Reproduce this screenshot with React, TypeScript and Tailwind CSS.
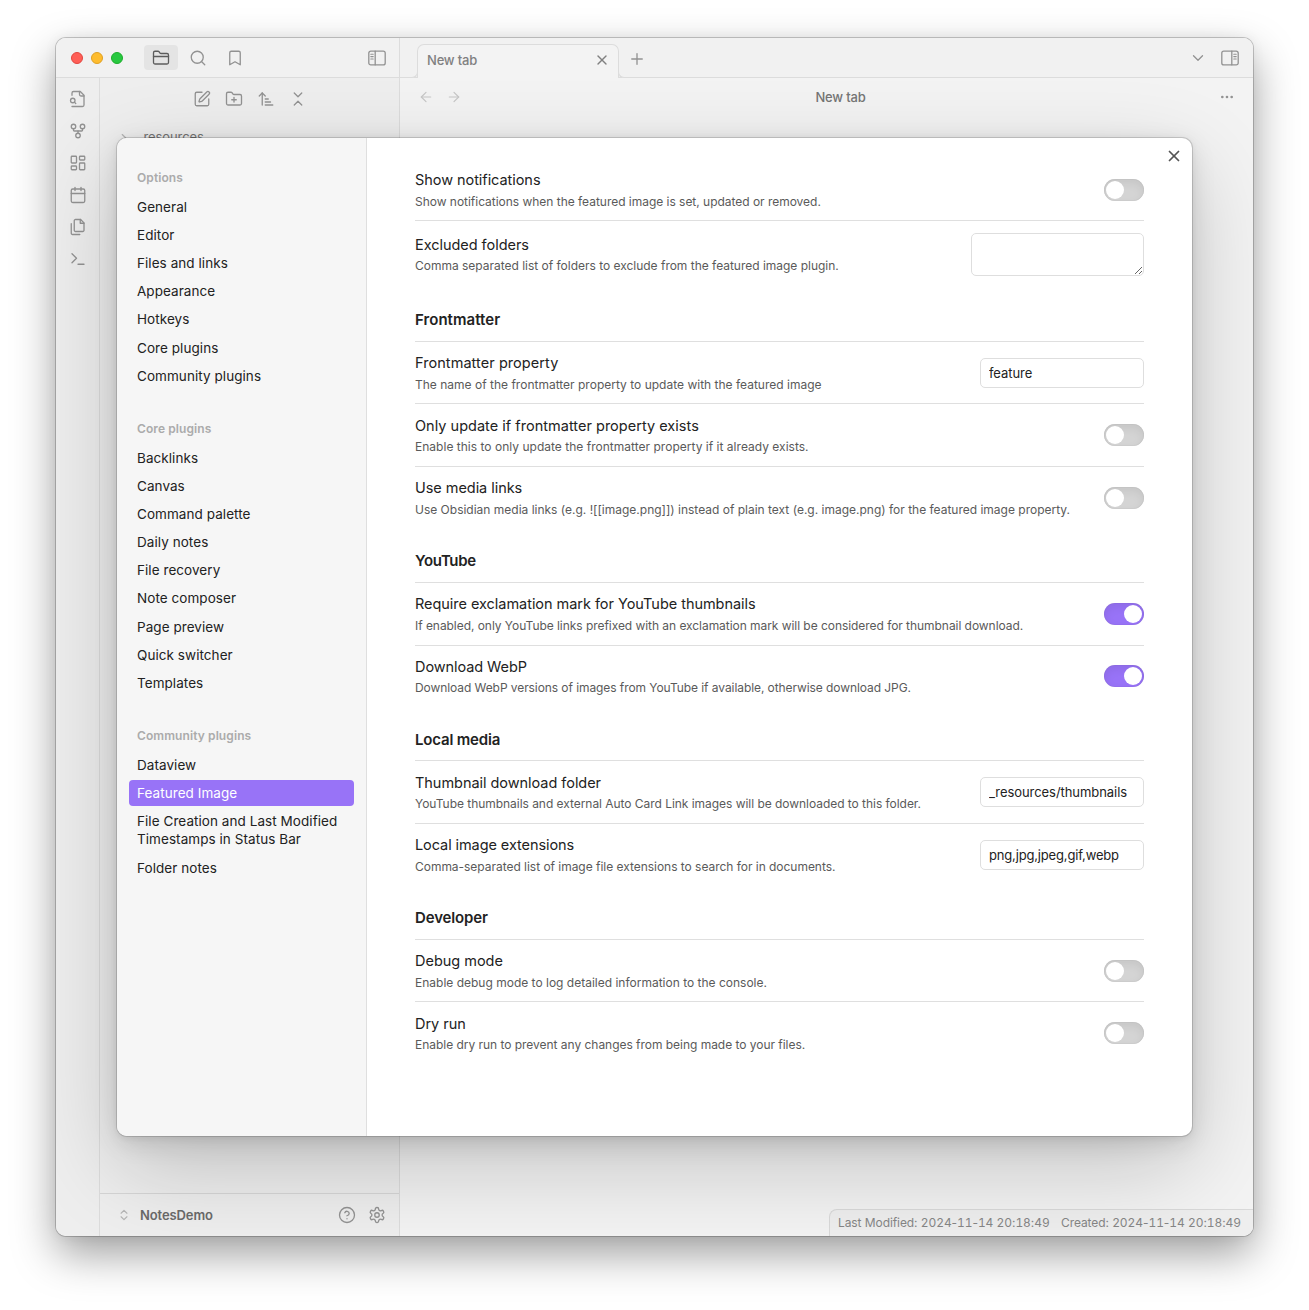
import type { ReactNode } from "react";
import {
  ArrowLeft,
  ArrowRight,
  ArrowUpNarrowWide,
  Bookmark,
  Calendar,
  ChevronDown,
  ChevronRight,
  ChevronsDownUp,
  ChevronsUpDown,
  CircleQuestionMark,
  FolderClosed,
  FolderPlus,
  GitFork,
  LayoutDashboard,
  MoreHorizontal,
  Plus,
  Search,
  SquarePen,
  X,
} from "lucide-react";

/* ---------- icons ---------- */

function Icon({ children, size = 18 }: { children: ReactNode; size?: number }) {
  return (
    <svg
      width={size}
      height={size}
      viewBox="0 0 24 24"
      fill="none"
      stroke="currentColor"
      strokeWidth={1.75}
      strokeLinecap="round"
      strokeLinejoin="round"
    >
      {children}
    </svg>
  );
}

const FileSearchIcon = () => (
  <Icon>
    <path d="M4 22h14a2 2 0 0 0 2-2V7l-5-5H6a2 2 0 0 0-2 2v3" />
    <path d="M14 2v4a2 2 0 0 0 2 2h4" />
    <circle cx="5" cy="14" r="3" />
    <path d="m9 18-1.5-1.5" />
  </Icon>
);

const FilesIcon = () => (
  <Icon>
    <path d="M15.5 2H8.6c-.4 0-.8.2-1.1.5-.3.3-.5.7-.5 1.1v12.8c0 .4.2.8.5 1.1.3.3.7.5 1.1.5h9.8c.4 0 .8-.2 1.1-.5.3-.3.5-.7.5-1.1V6.5L15.5 2z" />
    <path d="M3 7.6v12.8c0 .4.2.8.5 1.1.3.3.7.5 1.1.5h9.8" />
    <path d="M15 2v5h5" />
  </Icon>
);

const TerminalIcon = () => (
  <Icon>
    <path d="m4 17 6-6-6-6" />
    <path d="M12 19h8" />
  </Icon>
);

const GearIcon = () => (
  <Icon>
    <path d="M12.22 2h-.44a2 2 0 0 0-2 2v.18a2 2 0 0 1-1 1.73l-.43.25a2 2 0 0 1-2 0l-.15-.08a2 2 0 0 0-2.73.73l-.22.38a2 2 0 0 0 .73 2.73l.15.1a2 2 0 0 1 1 1.72v.51a2 2 0 0 1-1 1.74l-.15.09a2 2 0 0 0-.73 2.73l.22.38a2 2 0 0 0 2.73.73l.15-.08a2 2 0 0 1 2 0l.43.25a2 2 0 0 1 1 1.73V20a2 2 0 0 0 2 2h.44a2 2 0 0 0 2-2v-.18a2 2 0 0 1 1-1.73l.43-.25a2 2 0 0 1 2 0l.15.08a2 2 0 0 0 2.73-.73l.22-.39a2 2 0 0 0-.73-2.73l-.15-.08a2 2 0 0 1-1-1.74v-.5a2 2 0 0 1 1-1.74l.15-.09a2 2 0 0 0 .73-2.73l-.22-.38a2 2 0 0 0-2.73-.73l-.15.08a2 2 0 0 1-2 0l-.43-.25a2 2 0 0 1-1-1.73V4a2 2 0 0 0-2-2z" />
    <circle cx="12" cy="12" r="3" />
  </Icon>
);

function SidebarToggleIcon({ flipped = false }: { flipped?: boolean }) {
  return (
    <svg
      width="18"
      height="16"
      viewBox="0 0 18 16"
      fill="none"
      stroke="currentColor"
      strokeWidth="1.3"
      strokeLinecap="round"
      className={flipped ? "-scale-x-100" : ""}
    >
      <rect x="0.8" y="1.1" width="16.4" height="13.8" rx="2" />
      <path d="M7.2 1.2v13.6" />
      <path d="M2.8 4.2h2.4M2.8 6.6h2.4M2.8 9h2.4" strokeWidth="1.1" />
    </svg>
  );
}

/* ---------- settings controls ---------- */

function Toggle({ on }: { on: boolean }) {
  return (
    <div
      className={`flex h-[22px] w-10 shrink-0 rounded-full p-[2px] shadow-[inset_0_4px_10px_rgba(0,0,0,0.07),inset_0_0_1px_rgba(0,0,0,0.21)] ${
        on ? "justify-end bg-[#9873f7]" : "justify-start bg-[#d4d4d4]"
      }`}
    >
      <div className="size-[18px] rounded-full bg-white" />
    </div>
  );
}

function TextInput({ value, tracking = "tracking-[-0.06px]" }: { value: string; tracking?: string }) {
  return (
    <input
      readOnly
      value={value}
      className={`h-[30px] w-[164px] shrink-0 rounded-[5px] border border-[#dedede] bg-white px-2 text-[13px] text-[#222] outline-none ${tracking}`}
    />
  );
}

type RowProps = {
  name: string;
  desc: string;
  height?: string;
  tracking?: string;
  nameTracking?: string;
  pad?: string;
  gap?: string;
  controlHeight?: string;
  first?: boolean;
  children: ReactNode;
};

function Row({
  name,
  desc,
  height = "h-[63px]",
  tracking = "tracking-[-0.03px]",
  nameTracking = "tracking-[-0.02px]",
  pad = "pt-[11px]",
  gap = "mt-[3px]",
  controlHeight = "h-[62px]",
  first,
  children,
}: RowProps) {
  return (
    <div
      className={`flex items-start justify-between border-t ${first ? "border-transparent" : "border-[#dfdfdf]"} ${height}`}
    >
      <div className={pad}>
        <div className={`h-5 text-[14.5px] leading-5 whitespace-nowrap text-[#222] ${nameTracking}`}>{name}</div>
        <div className={`h-[18px] text-[12px] leading-[18px] whitespace-nowrap text-[#5a5a5a] ${gap} ${tracking}`}>
          {desc}
        </div>
      </div>
      <div className={`flex items-center ${controlHeight}`}>{children}</div>
    </div>
  );
}

function Heading({
  children,
  height,
  pad = "pb-[11px]",
  tracking = "tracking-[-0.08px]",
}: {
  children: string;
  height: string;
  pad?: string;
  tracking?: string;
}) {
  return (
    <div className={`flex items-end ${pad} ${height}`}>
      <h3 className={`text-[15px] leading-5 font-semibold text-[#222] ${tracking}`}>{children}</h3>
    </div>
  );
}

/* ---------- settings navigation ---------- */

type NavItem = { label: string; spaced?: boolean; active?: boolean };

const NAV: { title: string; items: NavItem[] }[] = [
  {
    title: "Options",
    items: [
      { label: "General" },
      { label: "Editor" },
      { label: "Files and links" },
      { label: "Appearance" },
      { label: "Hotkeys" },
      { label: "Core plugins", spaced: true },
      { label: "Community plugins" },
    ],
  },
  {
    title: "Core plugins",
    items: [
      { label: "Backlinks" },
      { label: "Canvas" },
      { label: "Command palette" },
      { label: "Daily notes" },
      { label: "File recovery" },
      { label: "Note composer" },
      { label: "Page preview", spaced: true },
      { label: "Quick switcher" },
      { label: "Templates" },
    ],
  },
  {
    title: "Community plugins",
    items: [
      { label: "Dataview" },
      { label: "Featured Image", active: true },
      { label: "File Creation and Last Modified Timestamps in Status Bar" },
      { label: "Folder notes", spaced: true },
    ],
  },
];

function SettingsNav() {
  return (
    <nav className="flex w-[250px] shrink-0 flex-col gap-7 border-r border-[#dfdfdf] bg-[#f6f6f6] px-3 pt-[30px]">
      {NAV.map((group) => (
        <section key={group.title}>
          <h2 className="mb-[6px] px-2 text-[12px] leading-5 font-semibold tracking-[0.09px] text-[#ababab]">
            {group.title}
          </h2>
          {group.items.map(({ label, spaced, active }) => (
            <div key={label} className={spaced ? "pt-px pb-[2px]" : "pb-[2px]"}>
              <div
                className={`w-[225px] rounded-[4px] px-2 py-1 text-[13.5px] leading-[18px] tracking-[0.06px] ${
                  active ? "bg-[#9873f7] text-white" : "text-[#222]"
                }`}
              >
                {label}
              </div>
            </div>
          ))}
        </section>
      ))}
    </nav>
  );
}

function SettingsModal() {
  return (
    <div className="absolute top-[100px] left-[61px] flex h-[998px] w-[1075px] overflow-hidden rounded-[10px] bg-white shadow-[0_0_0_1px_rgba(0,0,0,0.14),0_1.8px_7.3px_rgba(0,0,0,0.071),0_6.3px_24.7px_rgba(0,0,0,0.112),0_30px_90px_rgba(0,0,0,0.2)]">
      <SettingsNav />
      <div className="flex-1 px-12 pt-5">
        <Row
          first
          name="Show notifications"
          nameTracking="tracking-[-0.05px]"
          desc="Show notifications when the featured image is set, updated or removed."
          tracking="tracking-[-0.025px]"
          height="h-[62px]"
        >
          <Toggle on={false} />
        </Row>
        <div className="flex h-[68px] items-center justify-between border-t border-[#dfdfdf]">
          <div>
            <div className="h-5 text-[14.5px] leading-5 tracking-[-0.04px] text-[#222]">Excluded folders</div>
            <div className="mt-[2px] text-[12px] leading-[18px] tracking-[-0.015px] text-[#5a5a5a]">
              Comma separated list of folders to exclude from the featured image plugin.
            </div>
          </div>
          <textarea
            readOnly
            className="block h-[43px] w-[173px] resize rounded-[5px] border border-[#dedede] bg-white outline-none"
          />
        </div>

        <Heading height="h-[53px]" tracking="tracking-[0.05px]">
          Frontmatter
        </Heading>
        <Row
          name="Frontmatter property"
          nameTracking="tracking-[0.06px]"
          desc="The name of the frontmatter property to update with the featured image"
          tracking="tracking-[0.005px]"
          height="h-[62px]"
        >
          <TextInput value="feature" />
        </Row>
        <Row
          name="Only update if frontmatter property exists"
          nameTracking="tracking-[0.02px]"
          desc="Enable this to only update the frontmatter property if it already exists."
          tracking="tracking-[0.018px]"
          pad="pt-[12px]"
          gap="mt-[2px]"
        >
          <Toggle on={false} />
        </Row>
        <Row
          name="Use media links"
          nameTracking="tracking-[-0.05px]"
          desc="Use Obsidian media links (e.g. ![[image.png]]) instead of plain text (e.g. image.png) for the featured image property."
          tracking="tracking-[-0.005px]"
        >
          <Toggle on={false} />
        </Row>

        <Heading height="h-[53px]" tracking="tracking-[-0.3px]">
          YouTube
        </Heading>
        <Row
          name="Require exclamation mark for YouTube thumbnails"
          nameTracking="tracking-[-0.04px]"
          desc="If enabled, only YouTube links prefixed with an exclamation mark will be considered for thumbnail download."
          tracking="tracking-[-0.05px]"
        >
          <Toggle on />
        </Row>
        <Row
          name="Download WebP"
          nameTracking="tracking-[-0.08px]"
          desc="Download WebP versions of images from YouTube if available, otherwise download JPG."
          tracking="tracking-[-0.075px]"
          gap="mt-[2px]"
          controlHeight="h-[60px]"
        >
          <Toggle on />
        </Row>

        <Heading height="h-[52px]" pad="pb-[10px]" tracking="tracking-[-0.18px]">
          Local media
        </Heading>
        <Row
          name="Thumbnail download folder"
          nameTracking="tracking-[-0.04px]"
          desc="YouTube thumbnails and external Auto Card Link images will be downloaded to this folder."
          tracking="tracking-[-0.04px]"
          pad="pt-[12px]"
          gap="mt-[2px]"
        >
          <TextInput value="_resources/thumbnails" />
        </Row>
        <Row
          name="Local image extensions"
          nameTracking="tracking-[-0.08px]"
          desc="Comma-separated list of image file extensions to search for in documents."
        >
          <TextInput value="png,jpg,jpeg,gif,webp" tracking="tracking-[-0.17px]" />
        </Row>

        <Heading height="h-[53px]" tracking="tracking-[-0.13px]">
          Developer
        </Heading>
        <Row
          name="Debug mode"
          desc="Enable debug mode to log detailed information to the console."
          tracking="tracking-[0px]"
          height="h-[62px]"
        >
          <Toggle on={false} />
        </Row>
        <Row
          name="Dry run"
          desc="Enable dry run to prevent any changes from being made to your files."
          pad="pt-[12px]"
          gap="mt-[2px]"
        >
          <Toggle on={false} />
        </Row>
      </div>
      <button className="absolute top-[9px] right-[9px] text-[#555]">
        <X size={18} strokeWidth={2.3} />
      </button>
    </div>
  );
}

/* ---------- app window ---------- */

function Ribbon() {
  return (
    <div className="flex w-11 shrink-0 flex-col items-center gap-[14px] border-r border-[#dcdcdc] pt-3 text-[#929292]">
      <FileSearchIcon />
      <GitFork size={18} strokeWidth={1.75} />
      <LayoutDashboard size={18} strokeWidth={1.75} />
      <Calendar size={18} strokeWidth={1.75} />
      <FilesIcon />
      <TerminalIcon />
    </div>
  );
}

function FileSidebar() {
  return (
    <div className="flex flex-1 flex-col text-[#929292]">
      <div className="flex h-[42px] items-center justify-center gap-[14px]">
        <SquarePen size={18} strokeWidth={1.75} />
        <FolderPlus size={18} strokeWidth={1.75} />
        <ArrowUpNarrowWide size={18} strokeWidth={1.75} />
        <ChevronsDownUp size={18} strokeWidth={1.75} />
      </div>
      <div className="mt-[6px] flex h-6 items-center pl-[17px]">
        <ChevronRight size={14} strokeWidth={2} className="text-[#b5b5b5]" />
        <span className="ml-[12.5px] text-[13px] tracking-[-0.1px] text-[#757575]">resources</span>
      </div>
      <div className="mt-auto flex h-[43px] items-center border-t border-[#d6d6d6] pr-[13px] pl-[17px]">
        <ChevronsUpDown size={14} strokeWidth={2} className="text-[#b5b5b5]" />
        <span className="mt-[2px] ml-[9px] text-[13px] font-semibold tracking-[-0.1px] text-[#6a6a6a]">NotesDemo</span>
        <div className="ml-auto flex gap-3">
          <CircleQuestionMark size={18} strokeWidth={1.75} />
          <GearIcon />
        </div>
      </div>
    </div>
  );
}

function LeftPane() {
  return (
    <div className="flex w-[344px] shrink-0 flex-col border-r border-[#dcdcdc] bg-[#eeeeee]">
      <div className="flex h-10 shrink-0 items-center border-b border-[#dcdcdc] bg-[#f1f1f1] pr-[13px] pl-[15px] text-[#929292]">
        <div className="flex gap-2">
          <span className="size-3 rounded-full border border-[#e2463f] bg-[#ff5f57]" />
          <span className="size-3 rounded-full border border-[#dfa023] bg-[#febc2e]" />
          <span className="size-3 rounded-full border border-[#1dad2b] bg-[#28c840]" />
        </div>
        <div className="ml-[21px] flex h-[25px] w-[34px] items-center justify-center rounded-[4px] bg-[#e4e4e4] text-[#5c5c5c]">
          <FolderClosed size={18} strokeWidth={1.75} />
        </div>
        <Search size={18} strokeWidth={1.75} className="ml-[11px]" />
        <Bookmark size={18} strokeWidth={1.75} className="ml-[19px]" />
        <div className="ml-auto">
          <SidebarToggleIcon />
        </div>
      </div>
      <div className="flex flex-1">
        <Ribbon />
        <FileSidebar />
      </div>
    </div>
  );
}

/** Keeps digits on a fixed pitch while the separators stay narrow. */
function Timestamp({ value }: { value: string }) {
  return (
    <>
      {value.split(/([-: ])/).map((part, i) => (
        <span key={i} className={i % 2 === 0 ? "tabular-nums" : ""}>
          {part}
        </span>
      ))}
    </>
  );
}

function MainPane() {
  return (
    <div className="flex flex-1 flex-col bg-[#f3f3f3]">
      <div className="flex h-10 shrink-0 items-center border-b border-[#dcdcdc] bg-[#f1f1f1] pr-[14px] pl-[17px] text-[#929292]">
        <div className="relative mt-[6px] -mb-px flex h-[34px] w-[202px] items-center justify-between self-start rounded-t-[7px] border border-b-0 border-[#dcdcdc] bg-[#f3f3f3] pr-2 pb-[2px] pl-[9px]">
          <span className="absolute bottom-0 -left-[7px] size-[7px] rounded-br-[6px] border-r border-b border-[#dcdcdc] bg-[#f1f1f1]" />
          <span className="absolute -right-[7px] bottom-0 size-[7px] rounded-bl-[6px] border-b border-l border-[#dcdcdc] bg-[#f1f1f1]" />
          <span className="text-[13px] font-medium tracking-[-0.2px] text-[#808080]">New tab</span>
          <X size={16} strokeWidth={2} className="-mt-[2px] text-[#808080]" />
        </div>
        <Plus size={18} strokeWidth={1.75} className="mt-[2px] ml-[9px]" />
        <ChevronDown size={18} strokeWidth={1.75} className="mt-px ml-auto" />
        <div className="ml-[14px]">
          <SidebarToggleIcon flipped />
        </div>
      </div>
      <div className="flex h-[38px] items-center justify-between pr-[18px] pl-[18px]">
        <div className="flex w-[60px] gap-3 text-[#c6c6c6]">
          <ArrowLeft size={16} strokeWidth={1.75} />
          <ArrowRight size={16} strokeWidth={1.75} />
        </div>
        <span className="mt-px ml-[28px] text-[13px] font-medium tracking-[-0.2px] text-[#757575]">New tab</span>
        <div className="flex w-[60px] justify-end text-[#929292]">
          <MoreHorizontal size={16} strokeWidth={2} />
        </div>
      </div>
      <div className="mt-auto ml-auto flex h-[27px] w-[424px] items-center justify-between rounded-tl-[8px] border-t border-l border-[#d9d9d9] bg-[#eeeeee] pr-3 pl-2 text-[12px] tracking-[-0.08px] whitespace-pre text-[#868686]">
        <span>
          Last Modified: <Timestamp value="2024-11-14 20:18:49" />
        </span>
        <span>
          Created: <Timestamp value="2024-11-14 20:18:49" />
        </span>
      </div>
    </div>
  );
}

export default function App() {
  return (
    <div className="h-[1310px] w-[1309px] overflow-hidden bg-white pt-[38px] pl-[56px] font-['Inter',sans-serif]">
      <div className="relative h-[1198px] w-[1197px] rounded-[10px] shadow-[0_0_0_1px_rgba(0,0,0,0.2),0_0_14px_rgba(0,0,0,0.06),0_18px_44px_rgba(0,0,0,0.38)]">
        <div className="relative flex h-full overflow-hidden rounded-[10px]">
          <LeftPane />
          <MainPane />
          <SettingsModal />
        </div>
      </div>
    </div>
  );
}
